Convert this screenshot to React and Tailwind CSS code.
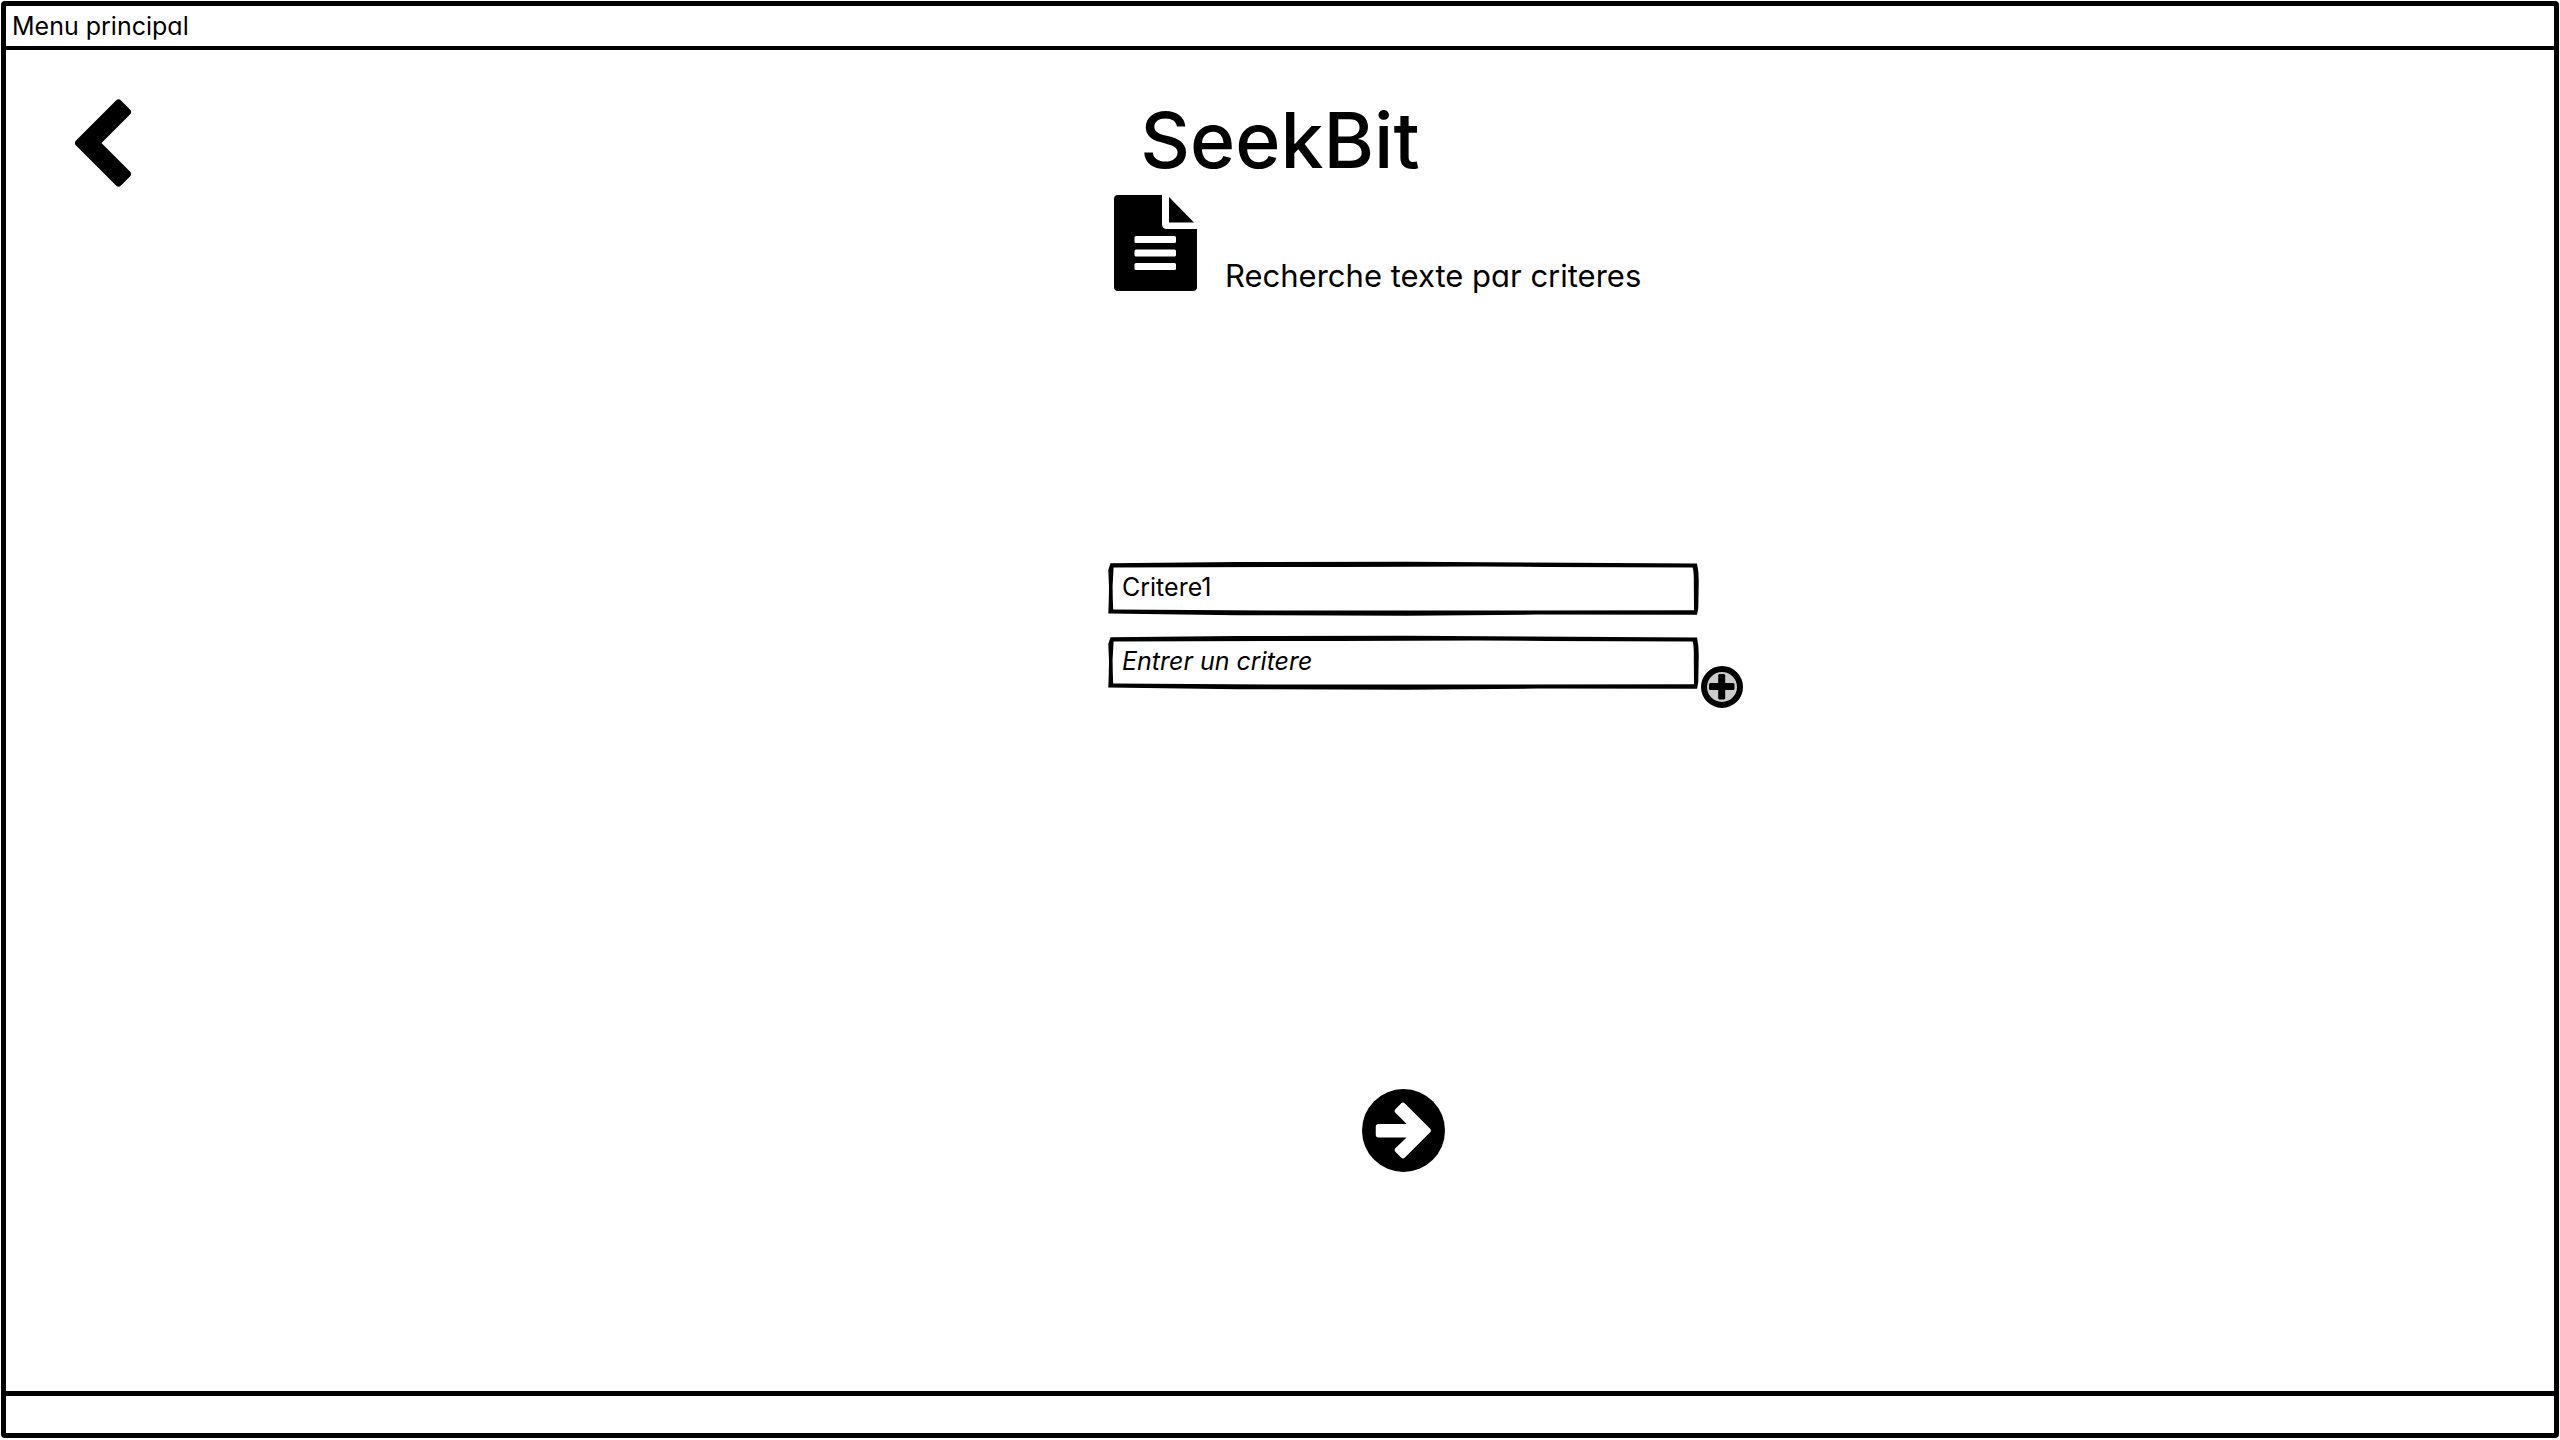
function SketchOutline() {
  return (
    <svg
      className="pointer-events-none absolute inset-0 h-full w-full overflow-visible"
      viewBox="0 0 592 54"
      preserveAspectRatio="none"
      aria-hidden="true"
    >
      <path
        fillRule="evenodd"
        d="M2.5 1.2 L130 0 L300 -.3 L420 .5 L591 1.5 Q593 10 592.7 22 L592.3 46 L591 52.8 L430 52.6 L300 53.8 L130 53.2 L.3 51.6 Q1 34 1 24 L.3 8 Z M5.600 5.400 L4.600 24 L4.800 36 L5.200 47.500 L160 48.500 L330 48.500 L588 48.200 L587.800 22 Q588 8 586.500 5.400 L440 5 L370 4.500 L230 5 Z"
      />
    </svg>
  );
}

function CriterionField({ label, ...props }) {
  return (
    <div className="relative h-[54px]">
      <input
        type="text"
        aria-label={label}
        className="block h-full w-full bg-white pr-4 pb-1 pl-3.5 text-[25px] text-black outline-none placeholder:text-black placeholder:italic placeholder:opacity-100"
        {...props}
      />
      <SketchOutline />
    </div>
  );
}

function ChevronLeft() {
  return (
    <svg className="block h-[88px] w-14" viewBox="0 0 56 88" aria-hidden="true">
      <path
        d="M3.5 44 L43.5 4 L52.5 13 L21.5 44 L52.5 75 L43.5 84 Z"
        fill="#000"
        stroke="#000"
        strokeWidth="7"
        strokeLinejoin="round"
      />
    </svg>
  );
}

function FileText() {
  return (
    <svg className="block h-24 w-[83px] shrink-0" viewBox="0 0 83 96" aria-hidden="true">
      <path d="M4 0 H48 V29 Q48 34 53 34 H83 V92 Q83 96 79 96 H4 Q0 96 0 92 V4 Q0 0 4 0 Z" />
      <path d="M55 2 L80 27.5 H55 Z" />
      <g fill="#fff">
        <rect x="20.500" y="41" width="41.500" height="7" rx="1.500" />
        <rect x="20.500" y="54.500" width="41.500" height="7" rx="1.500" />
        <rect x="20.500" y="68" width="41.500" height="7" rx="1.500" />
      </g>
    </svg>
  );
}

function PlusCircle() {
  return (
    <svg className="block size-[42px]" viewBox="0 0 42 42" aria-hidden="true">
      <circle cx="21" cy="21" r="18" fill="#ccc" stroke="#000" strokeWidth="6" />
      <rect x="8" y="17" width="25.500" height="7" rx="1.500" />
      <rect x="17.200" y="8" width="7" height="25.500" rx="1.500" />
    </svg>
  );
}

function ArrowCircle() {
  return (
    <svg className="block size-[83px]" viewBox="0 0 83 83" aria-hidden="true">
      <circle cx="41.5" cy="41.5" r="41.500" />
      <path
        d="M16.500 37.700 H51.500 L35.500 22 L41 16.500 L66 41.500 L41 66.500 L35.500 61 L51.500 45.700 H16.500 Z"
        fill="#fff"
        stroke="#fff"
        strokeWidth="5.500"
        strokeLinejoin="round"
      />
    </svg>
  );
}

export default function App() {
  return (
    <div className="flex h-screen min-h-[900px] flex-col bg-white px-px pt-px pb-0.5 font-['Inter',sans-serif] text-black [font-feature-settings:'cv11']">
      <div className="flex flex-1 flex-col rounded-sm border-[5px] border-black">
        <header className="flex h-11 items-center border-b-4 border-black px-1.5">
          <button type="button" className="text-[25px] leading-8">
            Menu principal
          </button>
        </header>

        <main className="flex-1">
          <div className="grid grid-cols-[1fr_auto_1fr] items-start px-[69px]">
            <button type="button" aria-label="Retour" className="mt-[49px] justify-self-start">
              <ChevronLeft />
            </button>
            <h1 className="mt-[42px] text-[77px] leading-24 font-medium">SeekBit</h1>
          </div>

          <div className="grid grid-cols-[1fr_590px_1fr] pl-[246px]">
            <div className="col-start-2 mt-[7px] flex items-end gap-7 pl-1.5">
              <FileText />
              <h2 className="text-[31px] leading-[30px] whitespace-nowrap">
                Recherche texte par criteres
              </h2>
            </div>

            <form className="col-start-2 mt-[271px]" onSubmit={(e) => e.preventDefault()}>
              <div className="flex flex-col gap-5">
                <CriterionField label="Critere 1" defaultValue="Critere1" />
                <div className="relative">
                  <CriterionField label="Nouveau critere" placeholder="Entrer un critere" />
                  <button
                    type="button"
                    aria-label="Ajouter un critere"
                    className="absolute top-[30px] left-full ml-[3px]"
                  >
                    <PlusCircle />
                  </button>
                </div>
              </div>
              <button type="submit" aria-label="Rechercher" className="mx-auto mt-[399px] block">
                <ArrowCircle />
              </button>
            </form>
          </div>
        </main>

        <footer className="h-[42px] border-t-[5px] border-black" />
      </div>
    </div>
  );
}
